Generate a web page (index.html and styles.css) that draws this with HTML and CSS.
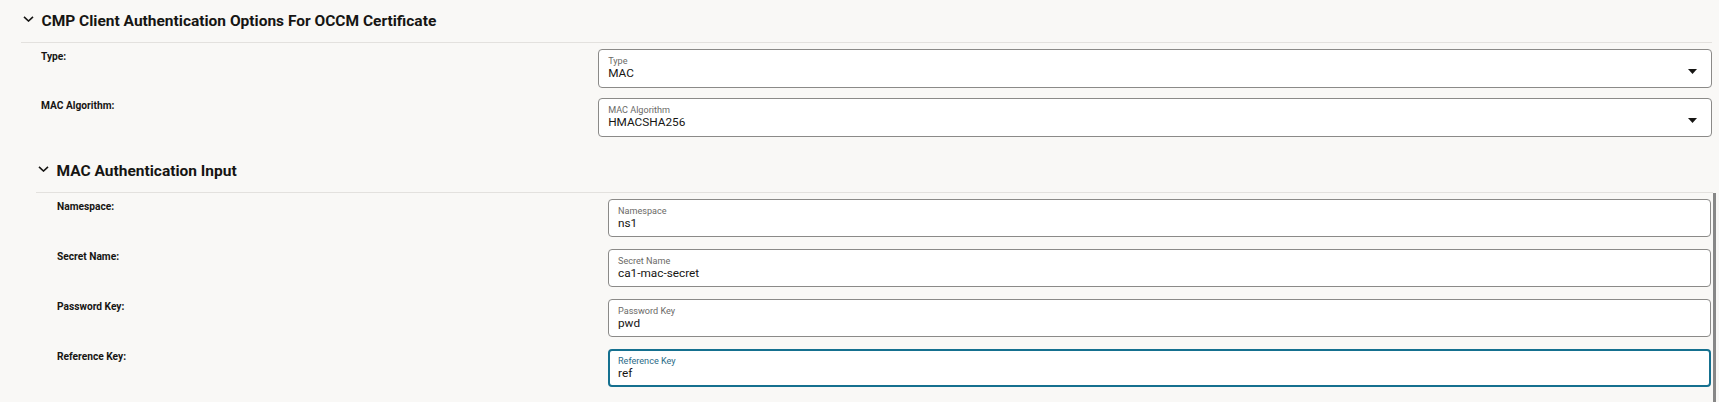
FILE: index.html
```html
<!DOCTYPE html>
<html lang="en">
<head>
<meta charset="utf-8">
<title>CMP Client Authentication</title>
<link rel="stylesheet" href="styles.css">
</head>
<body>
<div class="page">
  <section class="sec sec1">
    <header class="sec-head">
      <svg class="chev" width="11" height="6" viewBox="0 0 11 6"><polyline points="1,0.8 5.5,5 10,0.8" fill="none" stroke="#161513" stroke-width="1.6"/></svg>
      <h2 class="sec-title">CMP Client Authentication Options For OCCM Certificate</h2>
    </header>
    <div class="sec-body">
      <div class="row-label">Type:</div>
      <div class="field">
        <div class="field-text"><span class="field-label">Type</span><span class="field-value">MAC</span></div>
        <svg class="caret" width="9" height="5" viewBox="0 0 9 5"><polygon points="0,0 9,0 4.5,5" fill="#161513"/></svg>
      </div>
      <div class="row-label">MAC Algorithm:</div>
      <div class="field">
        <div class="field-text"><span class="field-label">MAC Algorithm</span><span class="field-value">HMACSHA256</span></div>
        <svg class="caret" width="9" height="5" viewBox="0 0 9 5"><polygon points="0,0 9,0 4.5,5" fill="#161513"/></svg>
      </div>
    </div>
  </section>
  <section class="sec sec2">
    <header class="sec-head">
      <svg class="chev" width="11" height="6" viewBox="0 0 11 6"><polyline points="1,0.8 5.5,5 10,0.8" fill="none" stroke="#161513" stroke-width="1.6"/></svg>
      <h2 class="sec-title">MAC Authentication Input</h2>
    </header>
    <div class="sec-body">
      <div class="row-label">Namespace:</div>
      <div class="field">
        <div class="field-text"><span class="field-label">Namespace</span><span class="field-value">ns1</span></div>
      </div>
      <div class="row-label">Secret Name:</div>
      <div class="field">
        <div class="field-text"><span class="field-label">Secret Name</span><span class="field-value">ca1-mac-secret</span></div>
      </div>
      <div class="row-label">Password Key:</div>
      <div class="field">
        <div class="field-text"><span class="field-label">Password Key</span><span class="field-value">pwd</span></div>
      </div>
      <div class="row-label">Reference Key:</div>
      <div class="field focused">
        <div class="field-text"><span class="field-label">Reference Key</span><span class="field-value">ref</span></div>
      </div>
    </div>
  </section>
</div>
</body>
</html>
```
FILE: styles.css
```css
* { box-sizing: border-box; }
html, body { margin: 0; }
body {
  background: #f9f8f6;
  color: #161513;
  font-family: Roboto, "Liberation Sans", sans-serif;
  overflow: hidden;
}
.page { padding: 0 7px 0 21px; }

.sec-head {
  height: 43px;
  display: flex;
  align-items: center;
  border-bottom: 1px solid #e3e1de;
}
.chev {
  flex: none;
  margin-left: 2px;
  margin-right: 7.5px;
  margin-bottom: 4px;
}
.sec-title {
  margin: 0;
  font-size: 15.5px;
  font-weight: 700;
  line-height: 20px;
  white-space: nowrap;
}

.sec-body {
  display: grid;
  grid-template-columns: 34.13% 1fr;
  align-items: start;
  padding-top: 6px;
}
.sec1 .sec-body { row-gap: 10.5px; padding-bottom: 13px; }
.sec2 { margin-left: 15px; margin-right: -4px; }
.sec2 .sec-head { margin-right: 3px; }
.sec2 .sec-body {
  grid-template-columns: 34.15% 1fr;
  row-gap: 11.5px;
  border-right: 3px solid #878787;
  padding-right: 2px;
  padding-bottom: 20px;
}

.row-label {
  padding-left: 20px;
  padding-top: 1px;
  font-size: 10.2px;
  font-weight: 700;
  line-height: 13px;
}
.sec2 .row-label { padding-left: 21px; }

.field {
  height: 38.5px;
  display: flex;
  align-items: flex-start;
  background: #fff;
  border: 1px solid #8b8a88;
  border-radius: 4px;
  padding: 6.2px 10px 0 9px;
}
.field.focused {
  border: 2px solid #15708f;
  padding: 5.2px 10px 0 8px;
}
.field-text { display: flex; flex-direction: column; }
.field-label {
  font-size: 9.1px;
  line-height: normal;
  color: #6b6a67;
}
.focused .field-label { color: #2a6b87; }
.field-value {
  font-size: 11.8px;
  line-height: normal;
  color: #161513;
}
.caret {
  margin-left: auto;
  margin-right: 4px;
  align-self: center;
}
```
